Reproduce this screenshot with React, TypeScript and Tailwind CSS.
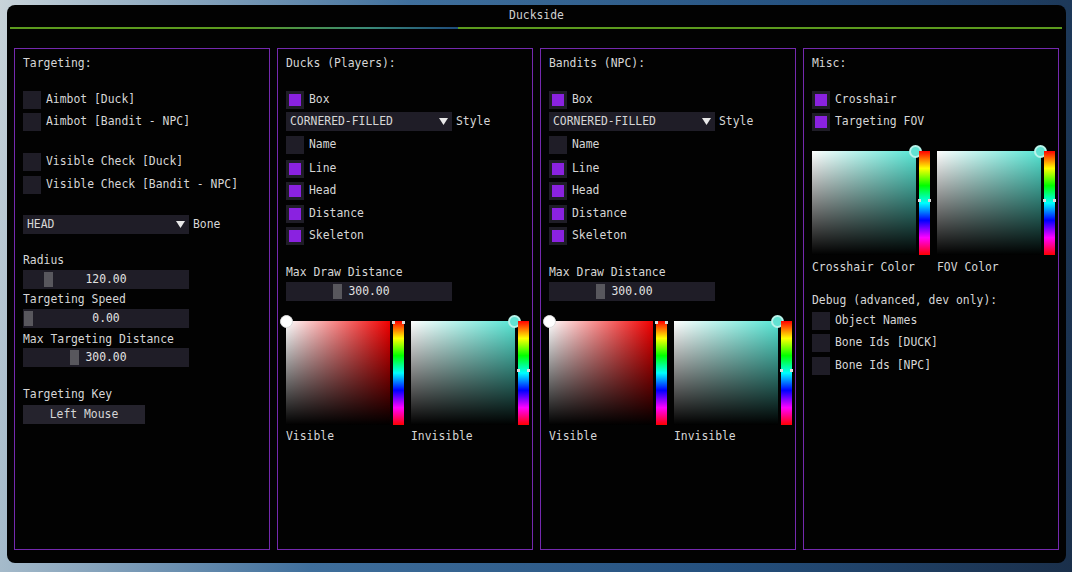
import { ReactNode } from "react";

const FONT = { fontFamily: '"DejaVu Sans Mono", "Liberation Mono", monospace' };

function Check({ label, on = false, className = "" }: { label: string; on?: boolean; className?: string }) {
  return (
    <div className={`flex items-center gap-[5px] h-[18px] ${className}`}>
      <div className="w-[18px] h-[18px] bg-[#1f1d27] p-[3px] shrink-0">
        {on && <div className="w-full h-full bg-[#8a22e0]" />}
      </div>
      <span>{label}</span>
    </div>
  );
}

function Combo({ value, label, className = "" }: { value: string; label: string; className?: string }) {
  return (
    <div className={`flex items-center gap-[4px] ${className}`}>
      <div className="w-[166px] h-[19px] bg-[#1f1d27] flex items-center justify-between pl-[4px] pr-[4px]">
        <span>{value}</span>
        <svg width="9" height="7" viewBox="0 0 9 7">
          <path d="M0 0 H9 L4.5 7 Z" fill="#e8e8e8" />
        </svg>
      </div>
      <span>{label}</span>
    </div>
  );
}

function Slider({ value, grab, className = "" }: { value: string; grab: number; className?: string }) {
  return (
    <div className={`relative w-[166px] h-[19px] bg-[#1f1d27] flex items-center justify-center ${className}`}>
      <div className="absolute top-[2px] w-[9px] h-[15px] bg-[#58575d]" style={{ left: grab }} />
      <span className="relative text-[#e2e2e2]">{value}</span>
    </div>
  );
}

function Picker({ hue, red = false }: { hue: string; red?: boolean }) {
  return (
    <div className="flex gap-[3px] shrink-0">
      <div className="relative w-[104px] h-[104px]" style={{ background: hue }}>
        <div className="absolute inset-0 bg-linear-to-r from-white to-transparent" />
        <div className="absolute inset-0 bg-linear-to-b from-transparent to-black" />
        {red ? (
          <div className="absolute -left-[6px] -top-[6px] w-[13px] h-[13px] rounded-full bg-white border border-[#ddd]" />
        ) : (
          <div className="absolute -right-[6px] -top-[6px] w-[13px] h-[13px] rounded-full bg-[#62e2d2] border-2 border-[#b9f3ea]" />
        )}
      </div>
      <div className="relative w-[11px] h-[104px] bg-[linear-gradient(to_bottom,#ff0000,#ffff00,#00ff00,#00ffff,#0000ff,#ff00ff,#ff0000)]">
        <div className={`absolute -left-[1px] w-[3px] h-[3px] bg-[#dcdcdc] ${red ? "top-0" : "top-[48px]"}`} />
        <div className={`absolute -right-[1px] w-[3px] h-[3px] bg-[#dcdcdc] ${red ? "top-0" : "top-[48px]"}`} />
      </div>
    </div>
  );
}

function Panel({ children }: { children: ReactNode }) {
  return (
    <div className="w-[256px] h-[502px] border border-[#7429ae] px-[8px] pt-[7px] flex flex-col shrink-0">
      {children}
    </div>
  );
}

function Label({ children, className = "" }: { children: ReactNode; className?: string }) {
  return <div className={`h-[14px] leading-[14px] whitespace-nowrap ${className}`}>{children}</div>;
}

function EspPanel({ title }: { title: string }) {
  const red = "#f20000";
  const teal = "#56e6d4";
  return (
    <Panel>
      <Label>{title}</Label>
      <Check label="Box" on className="mt-[21px]" />
      <Combo value="CORNERED-FILLED" label="Style" className="mt-[3px]" />
      <Check label="Name" className="mt-[5px]" />
      <Check label="Line" on className="mt-[6px]" />
      <Check label="Head" on className="mt-[4px]" />
      <Check label="Distance" on className="mt-[5px]" />
      <Check label="Skeleton" on className="mt-[4px]" />
      <Label className="mt-[20px]">Max Draw Distance</Label>
      <Slider value="300.00" grab={47} className="mt-[3px]" />
      <div className="flex gap-[7px] mt-[20px]">
        <Picker hue={red} red />
        <Picker hue={teal} />
      </div>
      <div className="flex mt-[4px]">
        <Label className="w-[125px]">Visible</Label>
        <Label>Invisible</Label>
      </div>
    </Panel>
  );
}

export default function App() {
  return (
    <div
      className="w-[1072px] h-[572px] overflow-hidden pt-[5px] pl-[7px] bg-[linear-gradient(100deg,#c9d4da_0%,#a7bccb_8%,#3f6f9c_35%,#24507e_70%,#1a2f4a_100%)] text-[11.4px] text-[#d6d6d6]"
      style={FONT}
    >
      <div className="w-[1059px] h-[558px] rounded-[8px] bg-[#020202] flex flex-col">
        <div className="h-[22px] flex items-center justify-center pb-[1px] text-[#d0d0d0]">Duckside</div>
        <div className="h-[2px] ml-[3px] mr-[4px] bg-[linear-gradient(to_right,#5c9b1e_0%,#5c9b1e_22%,#3a8b78_34%,#1f4c7c_42.6%,#5c9b1e_42.6%,#5c9b1e_100%)]" />
        <div className="flex gap-[7px] mt-[19px] pl-[7px]">
          <Panel>
            <Label>Targeting:</Label>
            <Check label="Aimbot [Duck]" className="mt-[21px]" />
            <Check label="Aimbot [Bandit - NPC]" className="mt-[4px]" />
            <Check label="Visible Check [Duck]" className="mt-[22px]" />
            <Check label="Visible Check [Bandit - NPC]" className="mt-[5px]" />
            <Combo value="HEAD" label="Bone" className="mt-[21px]" />
            <Label className="mt-[19px]">Radius</Label>
            <Slider value="120.00" grab={21} className="mt-[3px]" />
            <Label className="mt-[3px]">Targeting Speed</Label>
            <Slider value="0.00" grab={1} className="mt-[3px]" />
            <Label className="mt-[4px]">Max Targeting Distance</Label>
            <Slider value="300.00" grab={47} className="mt-[2px]" />
            <Label className="mt-[20px]">Targeting Key</Label>
            <div className="mt-[4px] w-[122px] h-[19px] bg-[#25232d] flex items-center justify-center">Left Mouse</div>
          </Panel>
          <EspPanel title="Ducks (Players):" />
          <EspPanel title="Bandits (NPC):" />
          <Panel>
            <Label>Misc:</Label>
            <Check label="Crosshair" on className="mt-[21px]" />
            <Check label="Targeting FOV" on className="mt-[4px]" />
            <div className="flex gap-[7px] mt-[20px]">
              <Picker hue="#56e6d4" />
              <Picker hue="#56e6d4" />
            </div>
            <div className="flex mt-[5px]">
              <Label className="w-[125px]">Crosshair Color</Label>
              <Label>FOV Color</Label>
            </div>
            <Label className="mt-[19px]">Debug (advanced, dev only):</Label>
            <Check label="Object Names" className="mt-[5px]" />
            <Check label="Bone Ids [DUCK]" className="mt-[4px]" />
            <Check label="Bone Ids [NPC]" className="mt-[5px]" />
          </Panel>
        </div>
      </div>
    </div>
  );
}
